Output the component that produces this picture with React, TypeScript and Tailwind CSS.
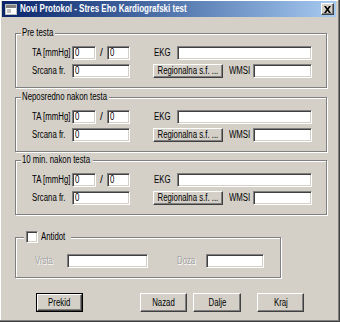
function T({ children, center }: { children: React.ReactNode; center?: boolean }) {
  return (
    <span
      className={`inline-block whitespace-nowrap scale-x-[0.78] ${center ? "origin-center" : "origin-left"}`}
    >
      {children}
    </span>
  )
}

function Field({ w, value }: { w: string; value?: string }) {
  return (
    <div
      className={`${w} h-[14px] shrink-0 bg-white border border-t-[#808080] border-l-[#808080] border-r-white border-b-white shadow-[inset_1px_1px_0_#404040,inset_-1px_-1px_0_#d4d0c8] pl-[2px] text-[10px] leading-[12px] text-black`}
    >
      {value && <T>{value}</T>}
    </div>
  )
}

function Button({ w, label, def }: { w: string; label: string; def?: boolean }) {
  return (
    <div className={`${w} shrink-0 ${def ? "border border-black" : ""}`}>
      <div className="h-full flex items-center justify-center bg-[#d4d0c8] border border-t-white border-l-white border-r-[#404040] border-b-[#404040] shadow-[inset_-1px_-1px_0_#808080] text-[10px] leading-none text-black">
        <T center>{label}</T>
      </div>
    </div>
  )
}

function Group({ title, tw }: { title: string; tw: string }) {
  return (
    <div className="relative w-[312px] h-[55px] border border-[#808080] shadow-[inset_1px_1px_0_#ffffff,1px_1px_0_#ffffff] pl-[16px] pt-[12px] flex flex-col gap-[4px]">
      <span className="absolute -top-[7px] left-[5px] px-[1px] bg-[#d4d0c8] text-[10px] leading-[12px] text-black">
        <span className={`block ${tw}`}>
          <T>{title}</T>
        </span>
      </span>
      {/* TA row */}
      <div className="flex items-center h-[14px] text-[10px] leading-[12px] text-black">
        <span className="w-[40px] shrink-0">
          <T>TA [mmHg]</T>
        </span>
        <Field w="w-[24px]" value="0" />
        <span className="w-[11px] shrink-0 text-center">/</span>
        <Field w="w-[23px]" value="0" />
        <span className="w-[23px] ml-[24px] shrink-0">
          <T>EKG</T>
        </span>
        <Field w="w-[135px]" />
      </div>
      {/* Srcana row */}
      <div className="flex items-center h-[14px] text-[10px] leading-[12px] text-black">
        <span className="w-[40px] shrink-0">
          <T>Srcana fr.</T>
        </span>
        <Field w="w-[58px]" value="0" />
        <div className="ml-[23px] h-[14px] flex">
          <Button w="w-[70px]" label="Regionalna s.f. ..." />
        </div>
        <span className="w-[24px] ml-[6px] shrink-0">
          <T>WMSI</T>
        </span>
        <Field w="w-[59px]" />
      </div>
    </div>
  )
}

export default function App() {
  return (
    <div className="w-[340px] h-[322px] bg-[#d4d0c8] pt-[1px] px-[2px] shadow-[inset_-1px_-1px_0_#404040,inset_-2px_-2px_0_#808080,inset_1px_1px_0_#ffffff] [font-family:'Liberation_Sans',Arial,sans-serif] overflow-hidden">
      {/* Title bar */}
      <div className="h-[16px] w-[334px] flex items-center bg-gradient-to-r from-[#0a246a] to-[#a6caf0] pl-[3px] pr-[2px]">
        <svg width="12" height="11" viewBox="0 0 12 11" className="shrink-0">
          <rect x="0.5" y="0.5" width="11" height="10" fill="#ffffff" stroke="#c0c0c0" />
          <rect x="1" y="1" width="10" height="3" fill="#808080" />
          <rect x="2" y="5" width="4" height="4" fill="#c0c0c0" />
        </svg>
        <span className="ml-[3px] text-[10px] font-bold text-white leading-none">
          <span className="inline-block whitespace-nowrap origin-left scale-x-[0.8]">
            Novi Protokol - Stres Eho Kardiografski test
          </span>
        </span>
        <div className="ml-auto w-[13px] h-[12px] bg-[#d4d0c8] border border-t-white border-l-white border-r-[#404040] border-b-[#404040] shadow-[inset_-1px_-1px_0_#808080] flex items-center justify-center">
          <svg width="7" height="7" viewBox="0 0 7 7">
            <path d="M0 0h2l1.5 2.2L5 0h2L4.6 3.5 7 7H5L3.5 4.8 2 7H0l2.4-3.5z" fill="#000" />
          </svg>
        </div>
      </div>

      {/* Content */}
      <div className="pl-[13px] flex flex-col">
        <div className="mt-[16px]">
          <Group title="Pre testa" tw="w-[32px]" />
        </div>
        <div className="mt-[9px]">
          <Group title="Neposredno nakon testa" tw="w-[86px]" />
        </div>
        <div className="mt-[8px]">
          <Group title="10 min. nakon testa" tw="w-[70px]" />
        </div>

        {/* Antidot */}
        <div className="mt-[22px] relative w-[266px] h-[41px] border border-[#808080] shadow-[inset_1px_1px_0_#ffffff,1px_1px_0_#ffffff] pl-[19px] pt-[16px]">
          <div className="absolute -top-[7px] left-[8px] px-[2px] bg-[#d4d0c8] flex items-center gap-[3px]">
            <div className="w-[12px] h-[12px] bg-white border border-t-[#808080] border-l-[#808080] border-r-white border-b-white shadow-[inset_1px_1px_0_#404040,inset_-1px_-1px_0_#d4d0c8]" />
            <span className="w-[28px] text-[10px] leading-[12px] text-black">
              <T>Antidot</T>
            </span>
          </div>
          <div className="flex items-center h-[14px] text-[10px] leading-[12px] text-[#a0a0a0] [text-shadow:1px_1px_0_#ffffff]">
            <span className="w-[32px] shrink-0">
              <T>Vrsta</T>
            </span>
            <Field w="w-[81px]" />
            <span className="w-[29px] ml-[29px] shrink-0">
              <T>Doza</T>
            </span>
            <Field w="w-[58px]" />
          </div>
        </div>

        {/* Buttons */}
        <div className="mt-[15px] h-[19px] flex pl-[21px]">
          <Button w="w-[47px]" label="Prekid" def />
          <div className="ml-[57px] flex">
            <Button w="w-[47px]" label="Nazad" />
          </div>
          <div className="ml-[6px] flex">
            <Button w="w-[48px]" label="Dalje" />
          </div>
          <div className="ml-[16px] flex">
            <Button w="w-[47px]" label="Kraj" />
          </div>
        </div>
      </div>
    </div>
  )
}
